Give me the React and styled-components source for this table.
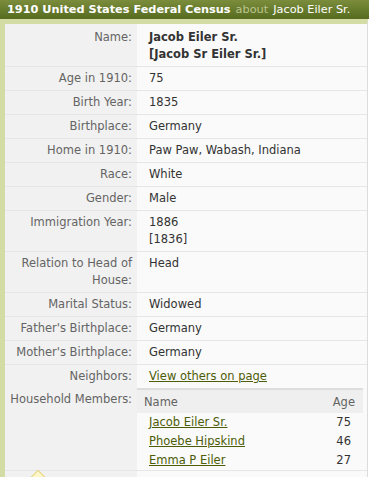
import React from 'react';
import styled, { createGlobalStyle } from 'styled-components';

const GlobalStyle = createGlobalStyle`
  html, body {
    margin: 0;
    padding: 0;
    background: #ffffff;
  }
  body {
    font-family: "DejaVu Sans", Verdana, sans-serif;
    font-size: 11.5px;
  }
`;

// Olive title bar
const Header = styled.div`
  height: 19px;
  padding: 0 7px;
  display: flex;
  align-items: center;
  background: linear-gradient(#7b8d3c, #566b1f);
  color: #ffffff;
  font-size: 11.3px;
  white-space: nowrap;
`;

const Title = styled.span`
  font-weight: bold;
`;

const About = styled.span`
  color: #bcc48e;
  margin: 0 5px;
`;

// Frame with the pale green edge
const Frame = styled.div`
  border-top: 5px solid #d4dca6;
  border-left: 5px solid #d4dca6;
  border-right: 1px solid #dcdcdc;
  margin-right: 1px;
  background: #fafafa;
`;

const Row = styled.div`
  display: grid;
  grid-template-columns: 132px 1fr;
  border-bottom: ${(p) => (p.$open ? 'none' : '1px solid #e6e6e6')};
  line-height: 17px;
`;

const Label = styled.div`
  background: #f1f1f1;
  color: #646464;
  text-align: right;
  padding: ${(p) => (p.$first ? '5px' : '3px')} 5px 3px 4px;
`;

const Value = styled.div`
  color: #333333;
  padding: ${(p) => (p.$flush ? '0 4px 0 0' : p.$first ? '5px 12px 3px' : '3px 12px')};
  font-weight: ${(p) => (p.$bold ? 'bold' : 'normal')};
`;

const Link = styled.a`
  color: #4d5c08;
  text-decoration: underline;
`;

// Household members sub-table
const Members = styled.div`
  border-top: 2px solid #dddddd;
`;

const MembersHead = styled.div`
  display: flex;
  justify-content: space-between;
  background: #efefef;
  color: #646464;
  padding: 4px 8px 3px 7px;
  line-height: 16px;
`;

const Member = styled.div`
  display: flex;
  justify-content: space-between;
  padding: 1px 12px;
  line-height: 17px;
  color: #333333;
`;

const Tail = styled.div`
  position: relative;
  display: grid;
  grid-template-columns: 132px 1fr;
  height: 8px;
`;

const TailLabel = styled.div`
  background: #f1f1f1;
`;

// Tooltip arrow peeking in at the bottom
const Arrow = styled.div`
  position: absolute;
  left: 25px;
  top: 2px;
  width: 14px;
  height: 14px;
  background: #fdf7c8;
  border: 1px solid #e3cf7e;
  transform: rotate(45deg);
`;

const rows = [
  ['Age in 1910:', ['75']],
  ['Birth Year:', ['1835']],
  ['Birthplace:', ['Germany']],
  ['Home in 1910:', ['Paw Paw, Wabash, Indiana']],
  ['Race:', ['White']],
  ['Gender:', ['Male']],
  ['Immigration Year:', ['1886', '[1836]']],
  ['Relation to Head of House:', ['Head']],
  ['Marital Status:', ['Widowed']],
  ["Father's Birthplace:", ['Germany']],
  ["Mother's Birthplace:", ['Germany']],
];

const members = [
  ['Jacob Eiler Sr.', 75],
  ['Phoebe Hipskind', 46],
  ['Emma P Eiler', 27],
];

const App = () => {
  return (
    <>
      <GlobalStyle />
      <Header>
        <Title>1910 United States Federal Census</Title>
        <About>about</About>
        Jacob Eiler Sr.
      </Header>
      <Frame>
        <Row>
          <Label $first>Name:</Label>
          <Value $first $bold>
            Jacob Eiler Sr.
            <br />
            [Jacob Sr Eiler Sr.]
          </Value>
        </Row>
        {rows.map(([label, lines]) => (
          <Row key={label}>
            <Label>{label}</Label>
            <Value>
              {lines.map((line, i) => (
                <div key={i}>{line}</div>
              ))}
            </Value>
          </Row>
        ))}
        <Row $open>
          <Label>Neighbors:</Label>
          <Value>
            <Link href="#">View others on page</Link>
          </Value>
        </Row>
        <Row>
          <Label>Household Members:</Label>
          <Value $flush>
            <Members>
              <MembersHead>
                <span>Name</span>
                <span>Age</span>
              </MembersHead>
              {members.map(([name, age]) => (
                <Member key={name}>
                  <Link href="#">{name}</Link>
                  <span>{age}</span>
                </Member>
              ))}
            </Members>
          </Value>
        </Row>
        <Tail>
          <TailLabel />
          <div />
          <Arrow />
        </Tail>
      </Frame>
    </>
  );
};

export default App;
